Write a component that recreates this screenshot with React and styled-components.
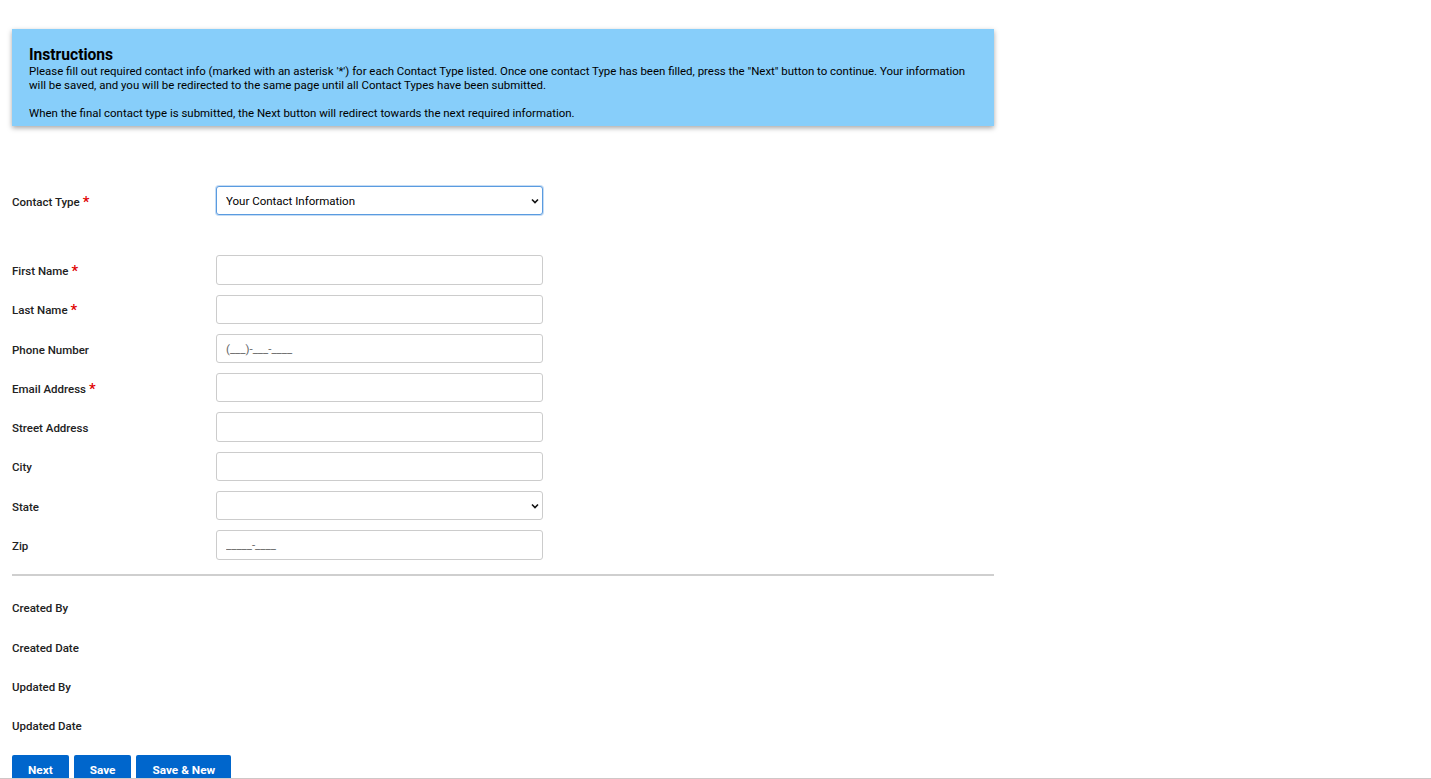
import React, { useState } from 'react';
import styled, { createGlobalStyle } from 'styled-components';

const GlobalStyle = createGlobalStyle`
  body {
    margin: 0;
    font-family: Roboto, "Liberation Sans", Arial, sans-serif;
    color: #111;
    background: #fff;
  }
`;

const chevron =
  "url(\"data:image/svg+xml;utf8,<svg xmlns='http://www.w3.org/2000/svg' width='8' height='6' viewBox='0 0 8 6'><path d='M1 1.5 L4 4.5 L7 1.5' fill='none' stroke='%23111' stroke-width='1.6'/></svg>\")";

const Page = styled.div`
  width: 982px;
  padding: 29px 0 0 12px;
`;

const InstructionsBox = styled.div`
  background-color: #87cefa;
  padding: 17px 17px 6px;
  box-shadow: 0 2px 5px rgba(0, 0, 0, 0.35);
  margin-bottom: 60px;
`;

const InstructionsTitle = styled.h2`
  margin: 0;
  font-size: 15.6px;
  line-height: 18px;
  font-weight: 700;
  color: #000;
`;

const InstructionsText = styled.p`
  margin: 0;
  font-size: 11.45px;
  line-height: 14px;
  color: #000;
`;

const Row = styled.div`
  display: flex;
  align-items: center;
  height: 29.3px;
  margin-bottom: ${(p) => p.$gap || '10px'};
`;

const Label = styled.label`
  width: 204px;
  flex-shrink: 0;
  font-size: 11.5px;
  font-weight: 500;
  color: #222;
  padding-top: 2px;
`;

const Required = styled.span`
  color: #e00000;
  font-size: 15px;
  margin-left: 3px;
  vertical-align: -1px;
`;

const TextInput = styled.input`
  box-sizing: border-box;
  width: 327px;
  height: 29.3px;
  border: 1px solid #ccc;
  border-radius: 3px;
  padding: 0 9px;
  font-family: inherit;
  font-size: 11.5px;
  color: #111;
  &::placeholder {
    color: #666;
  }
`;

const Select = styled.select`
  box-sizing: border-box;
  appearance: none;
  width: 327px;
  height: 29.3px;
  border: 1px solid ${(p) => (p.$active ? '#5a9be0' : '#ccc')};
  box-shadow: ${(p) => (p.$active ? '0 0 0 1px rgba(90,155,224,0.35)' : 'none')};
  border-radius: 3px;
  padding: 0 20px 0 9px;
  font-family: inherit;
  font-size: 11.5px;
  color: #000;
  background: #fff ${chevron} no-repeat right 3px center;
`;

const Divider = styled.hr`
  margin: 14px 0 13px;
  border: none;
  border-top: 2px solid #cfcfcf;
`;

const InfoRow = styled.div`
  height: 39.3px;
  display: flex;
  align-items: center;
  font-size: 11.5px;
  font-weight: 500;
  color: #222;
`;

const ButtonBar = styled.div`
  display: flex;
  gap: 5px;
  margin-top: 9px;
`;

const ActionButton = styled.button`
  height: 30px;
  padding: 0 16px;
  border: none;
  border-radius: 2px;
  background-color: #0066cc;
  color: #fff;
  font-family: inherit;
  font-size: 11.8px;
  font-weight: 700;
  cursor: pointer;
`;

const Footer = styled.div`
  position: fixed;
  left: 0;
  right: 0;
  bottom: 0;
  height: 1px;
  background: #cfc7c7;
`;

const fields = [
  { label: 'First Name', required: true },
  { label: 'Last Name', required: true },
  { label: 'Phone Number', placeholder: '(___)-___-____' },
  { label: 'Email Address', required: true },
  { label: 'Street Address' },
  { label: 'City' },
  { label: 'State', select: true },
  { label: 'Zip', placeholder: '_____-____' },
];

const App = () => {
  const [contactType, setContactType] = useState('your');

  return (
    <>
      <GlobalStyle />
      <Page>
        <InstructionsBox>
          <InstructionsTitle>Instructions</InstructionsTitle>
          <InstructionsText>
            Please fill out required contact info (marked with an asterisk '*') for each Contact Type listed. Once one contact Type has been filled, press the "Next" button to continue. Your information will be saved, and you will be redirected to the same page until all Contact Types have been submitted.
          </InstructionsText>
          <InstructionsText>&nbsp;</InstructionsText>
          <InstructionsText>
            When the final contact type is submitted, the Next button will redirect towards the next required information.
          </InstructionsText>
        </InstructionsBox>

        <Row $gap="40px">
          <Label>
            Contact Type<Required>*</Required>
          </Label>
          <Select $active value={contactType} onChange={(e) => setContactType(e.target.value)}>
            <option value="your">Your Contact Information</option>
            <option value="other">Other Contact</option>
          </Select>
        </Row>

        {fields.map((f) => (
          <Row key={f.label}>
            <Label>
              {f.label}
              {f.required && <Required>*</Required>}
            </Label>
            {f.select ? (
              <Select defaultValue="">
                <option value=""></option>
              </Select>
            ) : (
              <TextInput type="text" placeholder={f.placeholder} />
            )}
          </Row>
        ))}

        <Divider />

        <InfoRow>Created By</InfoRow>
        <InfoRow>Created Date</InfoRow>
        <InfoRow>Updated By</InfoRow>
        <InfoRow>Updated Date</InfoRow>

        <ButtonBar>
          <ActionButton>Next</ActionButton>
          <ActionButton>Save</ActionButton>
          <ActionButton>Save &amp; New</ActionButton>
        </ButtonBar>
      </Page>
      <Footer />
    </>
  );
};

export default App;
